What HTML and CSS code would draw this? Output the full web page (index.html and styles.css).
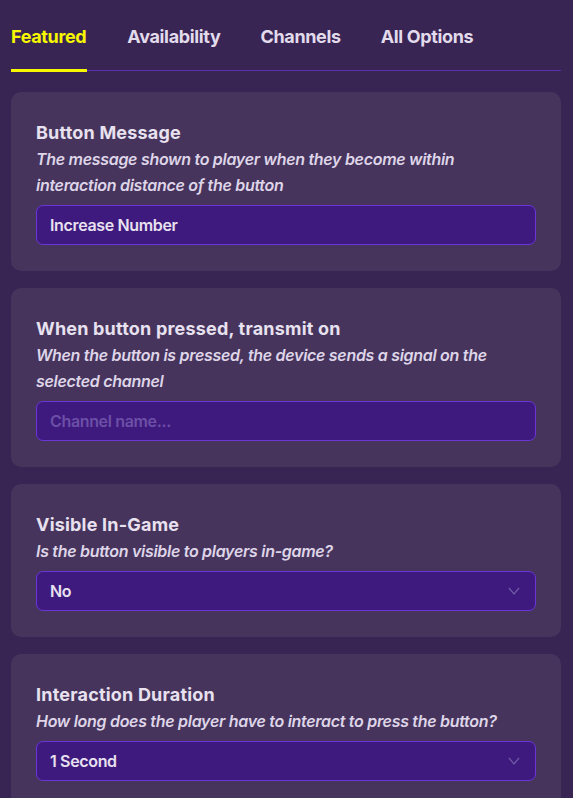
FILE: index.html
```html
<!DOCTYPE html>
<html lang="en">
<head>
<meta charset="utf-8">
<title>Button Settings</title>
<link rel="stylesheet" href="styles.css">
</head>
<body>
<div class="panel">
  <nav class="tabs">
    <div class="tab active">Featured</div>
    <div class="tab">Availability</div>
    <div class="tab">Channels</div>
    <div class="tab">All Options</div>
  </nav>

  <div class="cards">
    <section class="card">
      <h2 class="title">Button Message</h2>
      <p class="desc">The message shown to player when they become within interaction distance of the button</p>
      <div class="field"><span class="value">Increase Number</span></div>
    </section>

    <section class="card">
      <h2 class="title">When button pressed, transmit on</h2>
      <p class="desc">When the button is pressed, the device sends a signal on the selected channel</p>
      <div class="field"><span class="placeholder">Channel name...</span></div>
    </section>

    <section class="card">
      <h2 class="title">Visible In-Game</h2>
      <p class="desc">Is the button visible to players in-game?</p>
      <div class="field select"><span class="value">No</span>
        <svg class="chev" width="12" height="8" viewBox="0 0 12 8"><path d="M1 1 L6 7 L11 1" fill="none" stroke="#6f5aa6" stroke-width="1.2"/></svg>
      </div>
    </section>

    <section class="card">
      <h2 class="title">Interaction Duration</h2>
      <p class="desc">How long does the player have to interact to press the button?</p>
      <div class="field select"><span class="value">1 Second</span>
        <svg class="chev" width="12" height="8" viewBox="0 0 12 8"><path d="M1 1 L6 7 L11 1" fill="none" stroke="#6f5aa6" stroke-width="1.2"/></svg>
      </div>
    </section>
  </div>
</div>
</body>
</html>
```

FILE: styles.css
```css
* { box-sizing: border-box; }
html, body {
  margin: 0;
  padding: 0;
  background: #392553;
  height: 100%;
  overflow: hidden;
}
body {
  font-family: Inter, "Noto Sans", sans-serif;
  color: #e6dfee;
}
.panel {
  padding: 0 12px 0 11px;
}
.tabs {
  display: flex;
  gap: 40px;
  padding-top: 24px;
  border-bottom: 1px solid #5a2fae;
}
.tab {
  flex: 0 0 auto;
  white-space: nowrap;
  font-size: 18px;
  font-weight: 700;
  letter-spacing: -0.35px;
  color: #e2dbec;
  line-height: 26px;
  padding: 0 0 20px 0;
  position: relative;
}
.tab.active {
  color: #f7f700;
  padding-right: 1px;
}
.tab.active::after {
  content: "";
  position: absolute;
  left: 0;
  right: 0;
  bottom: -2px;
  height: 3px;
  background: #f7f700;
}
.cards {
  display: flex;
  flex-direction: column;
  gap: 17px;
  padding-top: 21px;
}
.card {
  background: #46345c;
  border-radius: 10px;
  padding: 29px 25px 26px 25px;
}
.title {
  margin: 0 0 1px 0;
  font-size: 18px;
  line-height: 24px;
  font-weight: 700;
  letter-spacing: 0.2px;
  color: #e8e1ef;
}
.desc {
  margin: 0 0 7px 0;
  font-size: 16px;
  line-height: 26px;
  font-style: italic;
  font-weight: 600;
  letter-spacing: -0.3px;
  color: #ded5e8;
}
.field {
  height: 40px;
  background: #3e1a7e;
  border: 1px solid #6a36d6;
  border-radius: 7px;
  display: flex;
  align-items: center;
  justify-content: space-between;
  padding: 0 15px 0 13px;
  font-size: 16px;
  font-weight: 600;
  letter-spacing: -0.35px;
}
.value { color: #e8e1f0; }
.placeholder { color: #6c4fa6; }
.chev { display: block; }
```
